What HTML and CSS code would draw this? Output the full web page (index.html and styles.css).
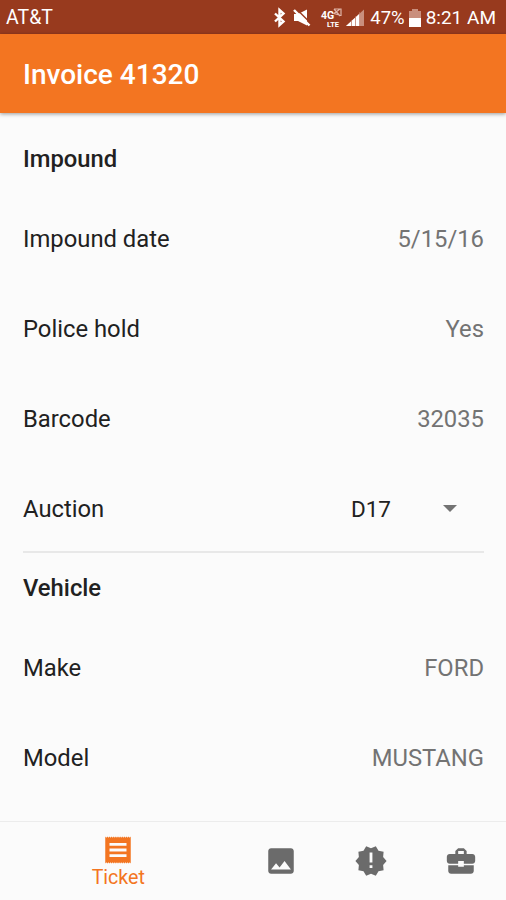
FILE: index.html
```html
<!DOCTYPE html>
<html lang="en">
<head>
<meta charset="utf-8">
<title>Invoice 41320</title>
<link rel="stylesheet" href="styles.css">
</head>
<body>
<div class="screen">
  <div class="status">
    <span class="carrier">AT&amp;T</span>
    <svg class="status-icons" width="94" height="24" viewBox="0 0 94 24" fill="none">
      <path d="M4 7.500l8.500 8-4 3.500V4l4 3.500-8.500 8" stroke="#fff" stroke-width="2.400"/>
      <path d="M23 8h4l9-4.500v16l-9-4.500h-4z" fill="#fff"/>
      <path d="M24.500 2l16 16" stroke="#983a1e" stroke-width="1.500"/>
      <path d="M23 4l15.500 15.500" stroke="#fff" stroke-width="2.400"/>
      <text class="network" x="50" y="13">4G</text>
      <text class="network small" x="56" y="21">LTE</text>
      <path d="M63 3l6 7M69 3l-6 4.500 7 2M63 3h7v7" stroke="#e0b5a8" stroke-width="1.200"/>
      <path d="M75 20L93 3.500V20z" fill="#c98f7d"/>
      <path d="M75 20L89 7.200V20z" fill="#fff"/>
      <path d="M80.500 14v6M84.500 10v10M88.500 6v14" stroke="#b96c56" stroke-width=".7"/>
    </svg>
    <span class="percent">47%</span>
    <svg class="battery" width="12" height="18" viewBox="0 0 12 18">
      <path d="M3 0h6v2h3v8H0V2h3z" fill="#c98f7d"/>
      <path d="M0 9h12v9H0z" fill="#fff"/>
    </svg>
    <span class="clock">8:21 AM</span>
  </div>
  <header class="appbar"><h1>Invoice 41320</h1></header>
  <main class="content">
    <section class="group">
      <h2>Impound</h2>
      <div class="row"><span>Impound date</span><span class="value">5/15/16</span></div>
      <div class="row"><span>Police hold</span><span class="value">Yes</span></div>
      <div class="row"><span>Barcode</span><span class="value">32035</span></div>
      <div class="row divided"><span>Auction</span>
        <span class="select">D17<svg width="14" height="7" viewBox="0 0 14 7"><path d="M0 0h14L7 7z" fill="#737373"/></svg></span>
      </div>
    </section>
    <section class="group">
      <h2>Vehicle</h2>
      <div class="row"><span>Make</span><span class="value">FORD</span></div>
      <div class="row"><span>Model</span><span class="value">MUSTANG</span></div>
    </section>
  </main>
  <nav class="tabs">
    <div class="tab active">
      <svg class="icon" viewBox="0 0 24 24"><path d="M18 17H6v-2h12v2zm0-4H6v-2h12v2zm0-4H6V7h12v2zM3 21.500l.75-.9.75.9.750-.9.750.9.750-.9.750.9.750-.9.750.9.750-.9.750.9.750-.9.750.9.750-.9.750.9.750-.9.750.9.750-.9.750.9.750-.9.750.9.750-.9.750.9.750-.9.750.9V2.500l-.75.9-.75-.9-.75.9-.75-.9-.75.9-.75-.9-.75.9-.75-.9-.75.9-.75-.9-.75.9-.75-.9-.75.9-.75-.9-.75.9-.75-.9-.75.9-.75-.9-.75.9-.75-.9-.75.9-.75-.9-.75.9-.75-.9z"/></svg>
      <span>Ticket</span>
    </div>
    <div class="tab"><svg class="icon" viewBox="0 0 24 24"><path d="M21 19V5c0-1.100-.9-2-2-2H5c-1.100 0-2 .9-2 2v14c0 1.100.9 2 2 2h14c1.100 0 2-.9 2-2zM8.500 13.500l2.500 3.010L14.500 12l4.500 6H5l3.500-4.500z"/></svg></div>
    <div class="tab"><svg class="icon" viewBox="0 0 24 24"><path d="M23 12l-2.440-2.780.34-3.680-3.610-.82-1.890-3.180L12 3 8.600 1.540 6.710 4.720l-3.610.81.34 3.680L1 12l2.440 2.780-.34 3.690 3.610.82 1.890 3.180L12 21l3.400 1.460 1.890-3.180 3.610-.82-.34-3.680L23 12zm-10 5h-2v-2h2v2zm0-4h-2V6h2v7z"/></svg></div>
    <div class="tab"><svg class="icon" viewBox="0 0 24 24"><path d="M10 16v-1H3.010L3 19c0 1.110.89 2 2 2h14c1.110 0 2-.89 2-2v-4h-7v1h-4zm10-9h-4.010V5l-2-2h-4l-2 2v2H4c-1.100 0-2 .9-2 2v3c0 1.110.89 2 2 2h6v-2h4v2h6c1.100 0 2-.9 2-2V9c0-1.100-.9-2-2-2zm-6 0h-4V5h4v2z"/></svg></div>
  </nav>
</div>
</body>
</html>
```

FILE: styles.css
```css
* { box-sizing: border-box; }
body { margin: 0; font-family: Roboto, sans-serif; background: #fbfbfb; color: #212121; }
.screen { height: 900px; display: flex; flex-direction: column; overflow: hidden; }
.status {
  flex: none; height: 34px; padding: 2px 10px 0 6px;
  display: flex; align-items: center;
  background: #983a1e; color: #fff; font-size: 19px; line-height: 32px;
}
.carrier { margin-right: auto; font-size: 19.500px; }
.percent { font-size: 18.500px; }
.status-icons { margin-right: 5px; }
.network { fill: #fff; font-size: 10.500px; font-weight: 700; }
.small { font-size: 7.500px; }
.battery { margin: 0 5px 0 4px; }
.appbar {
  flex: none; height: 79px; padding: 1px 23px 0;
  display: flex; align-items: center; position: relative;
  background: #f37521; color: #fff; box-shadow: 0 1px 4px rgba(0, 0, 0, .4);
}
h1 { margin: 0; font-size: 28px; font-weight: 500; }
.content { flex: 1; min-height: 0; padding: 10px 22px 0 23px; }
h2 { margin: 0; height: 70px; line-height: 72px; font-size: 23.800px; font-weight: 500; }
.group + .group h2 { height: 69px; line-height: 71px; }
.row {
  height: 90px; padding-top: 2px; display: flex; align-items: center; justify-content: space-between;
  font-size: 23.800px;
}
.divided { padding-top: 3px; border-bottom: 2px solid #e8e8e8; }
.value { color: #737373; }
.select { display: flex; align-items: center; gap: 52px; padding-right: 27px; font-size: 22.500px; }
.tabs { flex: none; height: 79px; display: flex; border-top: 1px solid #ececec; color: #6b6b6b; }
.tab { width: 90px; display: flex; flex-direction: column; align-items: center; justify-content: center; }
.tab.active { width: 237px; padding-bottom: 2px; color: #f37521; font-size: 19.600px; line-height: 21px; }
.icon { width: 34px; height: 34px; fill: currentColor; }
```
